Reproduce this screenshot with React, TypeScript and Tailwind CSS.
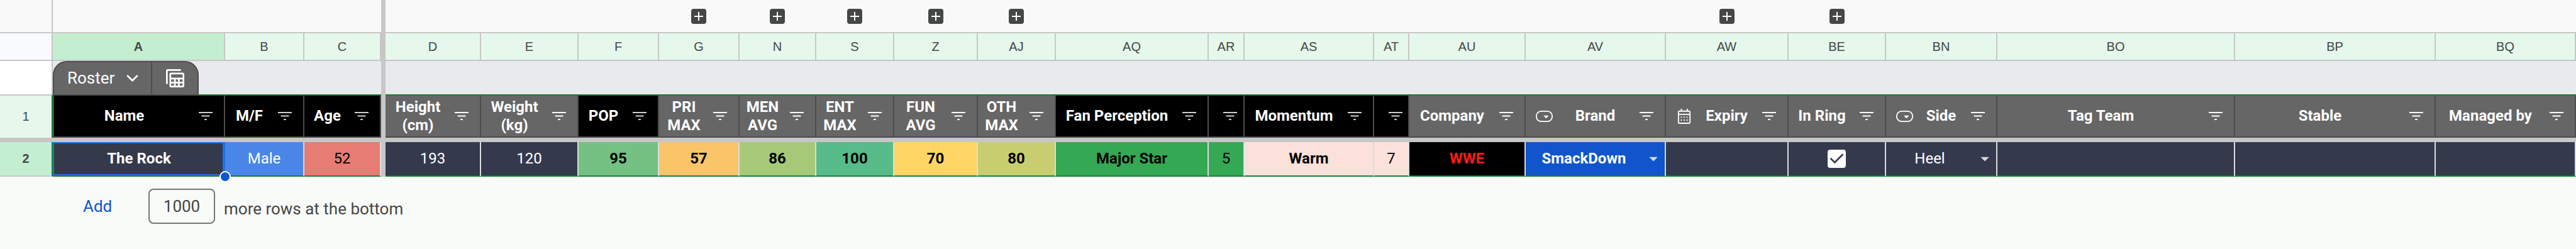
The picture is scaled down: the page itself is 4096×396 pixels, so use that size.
import { useState } from "react";

type Column = {
  id: string;
  width: string;
  title: string;
  headBg: string;
  filter: string;
  value: string;
  cell: string;
  kind?: "select" | "date" | "check";
  group?: boolean;
};

const black = "bg-black";
const gray = "bg-[#666666]";
const dim = "text-[#d0d0d0]";
const lit = "text-white";
const navy = "bg-[#35394c] text-white";

const columns: Column[] = [
  { id: "A", width: "w-[274px]", title: "Name", headBg: black, filter: dim, value: "The Rock", cell: "bg-[#35394c] text-white font-bold" },
  { id: "B", width: "w-[126px]", title: "M/F", headBg: black, filter: dim, value: "Male", cell: "bg-[#4a86e8] text-white" },
  { id: "C", width: "w-[122px]", title: "Age", headBg: black, filter: dim, value: "52", cell: "bg-[#e67c73] text-black" },
  { id: "D", width: "w-[152px]", title: "Height (cm)", headBg: gray, filter: lit, value: "193", cell: navy },
  { id: "E", width: "w-[155px]", title: "Weight (kg)", headBg: gray, filter: lit, value: "120", cell: navy },
  { id: "F", width: "w-[128px]", title: "POP", headBg: black, filter: dim, value: "95", cell: "bg-[#75c083] text-black font-bold" },
  { id: "G", width: "w-[128px]", title: "PRI MAX", headBg: gray, filter: lit, value: "57", cell: "bg-[#fac469] text-black font-bold", group: true },
  { id: "N", width: "w-[122px]", title: "MEN AVG", headBg: gray, filter: lit, value: "86", cell: "bg-[#a6c978] text-black font-bold", group: true },
  { id: "S", width: "w-[124px]", title: "ENT MAX", headBg: gray, filter: lit, value: "100", cell: "bg-[#57bb8a] text-black font-bold", group: true },
  { id: "Z", width: "w-[133px]", title: "FUN AVG", headBg: gray, filter: lit, value: "70", cell: "bg-[#ffd666] text-black font-bold", group: true },
  { id: "AJ", width: "w-[124px]", title: "OTH MAX", headBg: gray, filter: lit, value: "80", cell: "bg-[#c8ce6f] text-black font-bold", group: true },
  { id: "AQ", width: "w-[243px]", title: "Fan Perception", headBg: black, filter: dim, value: "Major Star", cell: "bg-[#34a853] text-black font-bold" },
  { id: "AR", width: "w-[57px]", title: "", headBg: black, filter: dim, value: "5", cell: "bg-[#34a853] text-black" },
  { id: "AS", width: "w-[206px]", title: "Momentum", headBg: black, filter: dim, value: "Warm", cell: "bg-[#fce1db] text-black font-bold" },
  { id: "AT", width: "w-[56px]", title: "", headBg: black, filter: dim, value: "7", cell: "bg-[#fce1db] text-black" },
  { id: "AU", width: "w-[185px]", title: "Company", headBg: gray, filter: lit, value: "WWE", cell: "bg-black text-[#ff1a1a] font-bold" },
  { id: "AV", width: "w-[223px]", title: "Brand", headBg: gray, filter: lit, value: "SmackDown", cell: "bg-[#1155cc] text-white font-bold", kind: "select" },
  { id: "AW", width: "w-[195px]", title: "Expiry", headBg: gray, filter: lit, value: "", cell: navy, kind: "date", group: true },
  { id: "BE", width: "w-[155px]", title: "In Ring", headBg: gray, filter: lit, value: "", cell: navy, kind: "check", group: true },
  { id: "BN", width: "w-[177px]", title: "Side", headBg: gray, filter: lit, value: "Heel", cell: navy, kind: "select" },
  { id: "BO", width: "w-[378px]", title: "Tag Team", headBg: gray, filter: lit, value: "", cell: navy },
  { id: "BP", width: "w-[319px]", title: "Stable", headBg: gray, filter: lit, value: "", cell: navy },
  { id: "BQ", width: "w-[223px]", title: "Managed by", headBg: gray, filter: lit, value: "", cell: navy },
];

const frozen = columns.slice(0, 3);
const scrolling = columns.slice(3);

function FilterIcon() {
  return (
    <svg viewBox="0 0 24 14" className="h-[13px] w-[22px]" fill="currentColor" aria-hidden="true">
      <path d="M0 0h24v2H0zM5 6h14v2H5zM10 12h4v2h-4z" />
    </svg>
  );
}

function ChipIcon() {
  return (
    <svg viewBox="0 0 30 20" className="h-[18px] w-[27px]" aria-hidden="true">
      <rect x="1" y="1" width="28" height="18" rx="8.500" fill="none" stroke="currentColor" strokeWidth="2" />
      <path d="M13.500 8.500h9.500l-4.750 5z" fill="currentColor" />
    </svg>
  );
}

function CalendarIcon() {
  return (
    <svg viewBox="0 0 24 26" className="h-[24px] w-[22px]" fill="none" stroke="currentColor" strokeWidth="2" aria-hidden="true">
      <rect x="2" y="4" width="20" height="21" rx="2" />
      <path d="M2 9.500h20M7 0v4M17.500 0v4" />
      <path d="M6 14.500h2M11 14.500h2M16 14.500h2M6 19.500h2M11 19.500h2M16 19.500h2" />
    </svg>
  );
}

function CalculatorIcon() {
  return (
    <svg viewBox="0 0 32 32" className="h-[29px] w-[29px]" aria-hidden="true">
      <path d="M1.500 26V3A1.500 1.500 0 0 1 3 1.500h23" fill="none" stroke="currentColor" strokeWidth="3" />
      <path
        fillRule="evenodd"
        fill="currentColor"
        d="M9 6h20a3 3 0 0 1 3 3v20a3 3 0 0 1-3 3H9a3 3 0 0 1-3-3V9a3 3 0 0 1 3-3zM9 9v6h20V9zM9 18v4h5v-4zM17 18v4h4v-4zM24 18v4h5v-4zM9 25v4h5v-4zM17 25v4h4v-4zM24 25v4h5v-4z"
      />
    </svg>
  );
}

function GroupButton({ id }: { id: string }) {
  return (
    <button type="button" aria-label={`Expand group at ${id}`} className="mx-auto flex size-6 items-center justify-center rounded-[4px] bg-[#444746] text-white">
      <svg viewBox="0 0 14 14" className="size-[14px]" stroke="currentColor" strokeWidth="2" aria-hidden="true">
        <path d="M7 0v14M0 7h14" />
      </svg>
    </button>
  );
}

function HeaderContent({ col }: { col: Column }) {
  const icon = col.kind === "select" ? <ChipIcon /> : col.kind === "date" ? <CalendarIcon /> : null;
  return (
    <div className="flex items-center">
      {icon && <span className={col.kind === "date" ? "w-[47px] pl-[18px]" : "w-[47px] pl-4"}>{icon}</span>}
      <span className="flex-1 px-2 text-center">{col.title}</span>
      <button type="button" aria-label={`Filter ${col.title || col.id}`} className={`flex w-[47px] shrink-0 justify-end pr-[18px] ${col.filter}`}>
        <FilterIcon />
      </button>
    </div>
  );
}

function CellContent({ col }: { col: Column }) {
  const [checked, setChecked] = useState(true);
  if (col.kind === "select") {
    return (
      <div className="relative">
        <select aria-label={col.title} defaultValue={col.value} className="w-full appearance-none bg-transparent pr-9 [text-align-last:center] outline-none">
          <option>{col.value}</option>
        </select>
        <svg viewBox="0 0 16 8" className="pointer-events-none absolute top-1/2 right-[11px] h-[7px] w-[14px] -translate-y-1/2 opacity-80" fill="white" aria-hidden="true">
          <path d="M0 0h16L8 8z" />
        </svg>
      </div>
    );
  }
  if (col.kind === "check") {
    return (
      <div className="mx-auto grid size-[29px]">
        <input
          type="checkbox"
          aria-label={col.title}
          checked={checked}
          onChange={(e) => setChecked(e.target.checked)}
          className="col-start-1 row-start-1 size-[29px] appearance-none rounded-[4px] border-2 border-white checked:bg-white"
        />
        {checked && (
          <svg viewBox="0 0 32 32" className="pointer-events-none col-start-1 row-start-1 size-[29px] text-[#35394c]" fill="none" stroke="currentColor" strokeWidth="3" aria-hidden="true">
            <path d="M5 15l7.500 7.500L27 8" />
          </svg>
        )}
      </div>
    );
  }
  return <>{col.value}</>;
}

export default function App() {
  return (
    <main className="min-h-screen overflow-x-auto bg-[#f9fbf8] font-['Roboto','Liberation_Sans',sans-serif] text-[24px] leading-[29px]">
      <table className="w-full table-fixed border-separate border-spacing-0">
        <colgroup>
          <col className="w-[84px]" />
          {frozen.map((c) => (
            <col key={c.id} className={c.width} />
          ))}
          <col className="w-[7px]" />
          {scrolling.map((c) => (
            <col key={c.id} className={c.width} />
          ))}
        </colgroup>
        <thead>
          <tr className="h-[53px] bg-[#f9f9f9]">
            <td className="border-r-2 border-b-2 border-[#c7c7c7] p-0" />
            <td colSpan={3} className="border-b-2 border-[#c7c7c7] p-0" />
            <td className="bg-[#c7c7c7] p-0" />
            {scrolling.map((c) => (
              <td key={c.id} className="border-b-2 border-[#c7c7c7] p-0 pr-0.5">
                {c.group && <GroupButton id={c.id} />}
              </td>
            ))}
          </tr>
          <tr className="h-[44px] bg-[#e6f8ec] font-['Liberation_Sans',sans-serif] text-[20px] text-[#444746]">
            <td className="border-r-2 border-b-2 border-[#c7c7c7] bg-[#f8fafd] p-0" />
            {frozen.map((c) => (
              <th key={c.id} scope="col" className={c.id === "A" ? "border-r-2 border-b-2 border-[#c7c7c7] bg-[#c4eed0] p-0 font-bold" : "border-r-2 border-b-2 border-[#c7c7c7] p-0 font-normal"}>
                {c.id}
              </th>
            ))}
            <td className="bg-[#c7c7c7] p-0" />
            {scrolling.map((c) => (
              <th key={c.id} scope="col" className="border-r-2 border-b-2 border-[#c7c7c7] p-0 font-normal">
                {c.id}
              </th>
            ))}
          </tr>
          <tr className="h-[53px] bg-[#e8eaed]">
            <td className="border-r-2 border-[#c7c7c7] bg-white p-0" />
            <td colSpan={3} className="p-0">
              <div className="relative z-10 -mb-0.5 flex h-[55px] w-[232px] overflow-hidden rounded-t-[22px] border-2 border-[#4d4d4d] bg-[#666666] text-[26px] text-white">
                <button type="button" className="flex w-[156px] items-center justify-between border-r-2 border-[#4d4d4d] pr-5 pl-[21px]">
                  Roster
                  <svg viewBox="0 0 20 12" className="h-[11px] w-[19px]" fill="none" stroke="currentColor" strokeWidth="3" aria-hidden="true">
                    <path d="M1 1l9 9 9-9" />
                  </svg>
                </button>
                <button type="button" aria-label="Table views" className="flex flex-1 items-center justify-center">
                  <CalculatorIcon />
                </button>
              </div>
            </td>
            <td className="bg-[#c7c7c7] p-0" />
            <td colSpan={scrolling.length} className="p-0" />
          </tr>
          <tr className="h-[69px] text-white">
            <th scope="row" className="border-t-2 border-r-2 border-t-[#c7c7c7] border-r-[#188038] bg-[#e6f8ec] p-0 font-['Liberation_Sans',sans-serif] text-[20px] font-normal text-[#444746]">
              1
            </th>
            {frozen.map((c) => (
              <th key={c.id} scope="col" className={`border-t-2 border-r-2 border-b-2 border-[#4d4d4d] border-t-[#188038] p-0 ${c.id === "A" ? "border-l-2" : ""} ${c.headBg}`}>
                <HeaderContent col={c} />
              </th>
            ))}
            <td className="bg-[#c7c7c7] p-0" />
            {scrolling.map((c) => (
              <th key={c.id} scope="col" className={`border-t-2 border-r-2 border-b-2 border-[#4d4d4d] border-t-[#188038] p-0 ${c.headBg}`}>
                <HeaderContent col={c} />
              </th>
            ))}
          </tr>
        </thead>
        <tbody>
          <tr className="h-[7px]">
            <td colSpan={columns.length + 2} className="bg-[#c7c7c7] p-0" />
          </tr>
          <tr className="h-[55px] text-center">
            <th scope="row" className="border-r-2 border-b-2 border-r-[#188038] border-b-[#c7c7c7] bg-[#c4eed0] p-0 font-['Liberation_Sans',sans-serif] text-[20px] font-bold text-[#444746]">
              2
            </th>
            {frozen.map((c) => (
              <td key={c.id} className={`border-b-2 border-b-[#188038] p-0 ${c.id === "A" ? "relative" : "border-r-2 border-r-[#dadce0]"} ${c.cell}`}>
                {c.id === "A" && (
                  <>
                    <span className="pointer-events-none absolute inset-0 border-2 border-r-4 border-[#1a73e8]" />
                    <span className="absolute -right-[9px] -bottom-[11px] z-10 size-[18px] rounded-full border-2 border-white bg-[#0b57d0]" />
                  </>
                )}
                <CellContent col={c} />
              </td>
            ))}
            <td className="bg-[#c7c7c7] p-0" />
            {scrolling.map((c) => (
              <td key={c.id} className={`border-r-2 border-b-2 border-r-[#dadce0] border-b-[#188038] p-0 ${c.cell}`}>
                <CellContent col={c} />
              </td>
            ))}
          </tr>
        </tbody>
      </table>
      <form className="flex items-center pt-[19px] pl-[132px] text-[26px] text-[#444746]" onSubmit={(e) => e.preventDefault()}>
        <button type="submit" className="w-[104px] text-left text-[#0b57d0]">
          Add
        </button>
        <input id="row-count" type="text" defaultValue="1000" className="h-14 w-[106px] rounded-[8px] border-2 border-[#747775] bg-transparent text-center" />
        <label htmlFor="row-count" className="pt-2 pl-3.5">
          more rows at the bottom
        </label>
      </form>
    </main>
  );
}
